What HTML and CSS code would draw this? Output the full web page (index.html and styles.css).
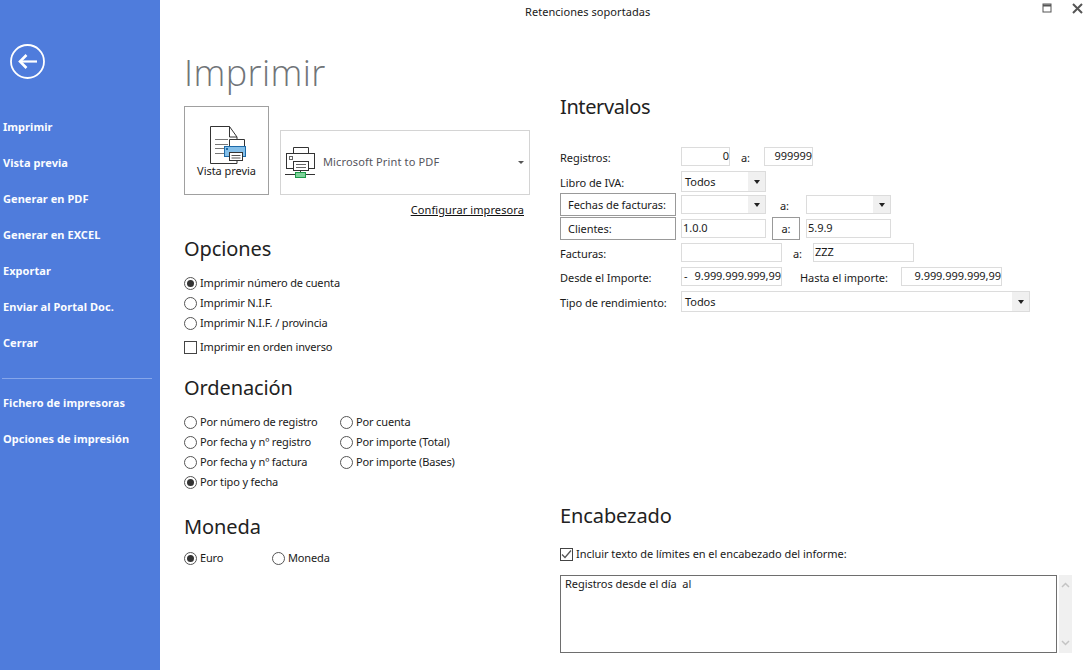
FILE: index.html
```html
<!DOCTYPE html>
<html lang="es">
<head>
<meta charset="utf-8">
<title>Retenciones soportadas</title>
<link rel="stylesheet" href="styles.css">
</head>
<body>
<div class="app">
  <aside class="side">
    <svg class="back" width="35" height="35" viewBox="0 0 35 35" fill="none" stroke="#fff">
      <circle cx="17.500" cy="17.500" r="16.500" stroke-width="1.800"/>
      <path d="M27 17.500H11" stroke-width="2.200"/>
      <path d="M16.500 11l-6.500 6.500 6.500 6.500" stroke-width="2.600"/>
    </svg>
    <nav class="nav">
      <a>Imprimir</a><a>Vista previa</a><a>Generar en PDF</a><a>Generar en EXCEL</a><a>Exportar</a><a>Enviar al Portal Doc.</a><a>Cerrar</a>
    </nav>
    <hr class="sep">
    <nav class="nav">
      <a>Fichero de impresoras</a><a>Opciones de impresión</a>
    </nav>
  </aside>
  <main class="main">
    <header class="bar">
      <span class="wintitle">Retenciones soportadas</span>
      <svg class="winbtn" width="10" height="10" viewBox="0 0 10 10" fill="none" stroke="#555"><rect x="1" y="1" width="8" height="8"/><path d="M1 2.500h8" stroke-width="2"/></svg>
      <svg class="winbtn close" width="11" height="11" viewBox="0 0 11 11" fill="none" stroke="#555" stroke-width="2"><path d="M1 1l9 9M10 1l-9 9"/></svg>
    </header>
    <div class="cols">
      <section class="left">
        <h1>Imprimir</h1>
        <div class="printrow">
          <button class="preview">
            <svg width="41" height="38" viewBox="0 0 41 38" fill="none">
              <path d="M18.500 37.500H4.500V.5h19l7.500 10.500v2.500M31 34v3.500H18" stroke="#333"/>
              <path d="M23.500 .5v10.500H31" stroke="#333"/>
              <path d="M9 13.500h13M9 18.500h13M9 22.500h9M9 27.500h9" stroke="#777"/>
              <path d="M23.500 20.500v-7h15v7" fill="#fff" stroke="#333"/>
              <rect x="18.500" y="20.500" width="21" height="10" fill="#84bfe9" stroke="#1d6aa8"/>
              <rect x="20" y="22" width="2" height="2" fill="#1d6aa8"/>
              <rect x="23.500" y="26.500" width="13" height="8" fill="#fff" stroke="#333"/>
              <path d="M25.500 29.500h9M25.500 32h9" stroke="#555"/>
            </svg>
            <span>Vista previa</span>
          </button>
          <div class="printer">
            <svg width="32" height="31" viewBox="0 0 32 31" fill="none">
              <path d="M9.500 6.500v-6h15v6" stroke="#333"/>
              <rect x="2.500" y="6.500" width="28" height="15" fill="#fff" stroke="#333"/>
              <rect x="5.500" y="9.500" width="3" height="3" stroke="#666"/>
              <rect x="9.500" y="14.500" width="15" height="9" fill="#fff" stroke="#333"/>
              <path d="M12 17.500h10M12 20.500h10" stroke="#666"/>
              <path d="M1 27.500h30M16.500 23.500v2" stroke="#333"/>
              <rect x="11.500" y="25.500" width="10" height="5" fill="#7fd39a" stroke="#1f9a4a"/>
            </svg>
            <span class="pname">Microsoft Print to PDF</span>
            <i class="caret small"></i>
          </div>
        </div>
        <div class="cfg"><a>Configurar impresora</a></div>
        <h2 class="h-op">Opciones</h2>
        <div class="list">
          <label class="opt"><i class="radio on"></i>Imprimir número de cuenta</label>
          <label class="opt"><i class="radio"></i>Imprimir N.I.F.</label>
          <label class="opt"><i class="radio"></i>Imprimir N.I.F. / provincia</label>
          <label class="opt chk"><i class="box"></i>Imprimir en orden inverso</label>
        </div>
        <h2 class="h-ord">Ordenación</h2>
        <div class="ordgrid">
          <label class="opt"><i class="radio"></i>Por número de registro</label>
          <label class="opt"><i class="radio"></i>Por cuenta</label>
          <label class="opt"><i class="radio"></i>Por fecha y nº registro</label>
          <label class="opt"><i class="radio"></i>Por importe (Total)</label>
          <label class="opt"><i class="radio"></i>Por fecha y nº factura</label>
          <label class="opt"><i class="radio"></i>Por importe (Bases)</label>
          <label class="opt"><i class="radio on"></i>Por tipo y fecha</label>
        </div>
        <h2 class="h-mon">Moneda</h2>
        <div class="monrow">
          <label class="opt"><i class="radio on"></i>Euro</label>
          <label class="opt"><i class="radio"></i>Moneda</label>
        </div>
      </section>
      <section class="right">
        <h2 class="h-int">Intervalos</h2>
        <div class="row r-reg">
          <span class="lab">Registros:</span>
          <div class="field num w49">0</div><span class="a a1">a:</span><div class="field num w49">999999</div>
        </div>
        <div class="row r-lib">
          <span class="lab">Libro de IVA:</span>
          <div class="combo w85">Todos<b><i class="caret"></i></b></div>
        </div>
        <div class="row r-box">
          <span class="lab boxed">Fechas de facturas:</span>
          <div class="combo short w85"><b><i class="caret"></i></b></div><span class="a a2">a:</span><div class="combo short w85"><b><i class="caret"></i></b></div>
        </div>
        <div class="row r-box">
          <span class="lab boxed">Clientes:</span>
          <div class="field w85">1.0.0</div><span class="a a3">a:</span><div class="field w85">5.9.9</div>
        </div>
        <div class="row r-fac">
          <span class="lab">Facturas:</span>
          <div class="field w101"></div><span class="a a4">a:</span><div class="field w101">ZZZ</div>
        </div>
        <div class="row r-imp">
          <span class="lab">Desde el Importe:</span>
          <div class="field num w101 split"><span>-</span><span>9.999.999.999,99</span></div><span class="hasta">Hasta el importe:</span><div class="field num w101">9.999.999.999,99</div>
        </div>
        <div class="row r-imp tall">
          <span class="lab">Tipo de rendimiento:</span>
          <div class="combo wide">Todos<b><i class="caret"></i></b></div>
        </div>
        <h2 class="h-enc">Encabezado</h2>
        <label class="opt inc"><i class="box tick"><svg width="13" height="13" viewBox="0 0 13 13" fill="none" stroke="#555" stroke-width="1.300"><path d="M2 6.500l3 3 6-7"/></svg></i>Incluir texto de límites en el encabezado del informe:</label>
        <div class="memo">
          <div class="memotext">Registros desde el día&nbsp; al</div>
          <div class="scroll">
            <svg width="9" height="6" viewBox="0 0 9 6" fill="none" stroke="#c4c4c4" stroke-width="1.500"><path d="M1 5l3.500-3.500L8 5"/></svg>
            <svg width="9" height="6" viewBox="0 0 9 6" fill="none" stroke="#c4c4c4" stroke-width="1.500"><path d="M1 1l3.500 3.500L8 1"/></svg>
          </div>
        </div>
      </section>
    </div>
  </main>
</div>
</body>
</html>
```
FILE: styles.css
```css
* { box-sizing: border-box; }
html, body { margin: 0; height: 100%; overflow: hidden; background: #fff; }
body { font: 11px/14px "Noto Sans", sans-serif; color: #1a1a1a; letter-spacing: -.05px; }
.app { display: flex; width: 1091px; height: 670px; }

.side { width: 160px; flex: none; background: #4f7cdc; color: #fff; padding: 44px 0 0 3px; }
.back { display: block; margin: 0 0 0 7px; }
.nav { display: flex; flex-direction: column; letter-spacing: .05px; }
.nav a { height: 36px; line-height: 36px; font-weight: 700; color: #fbfcff; }
.side > .nav:first-of-type { margin-top: 30px; }
.sep { margin: 17px 8px 6px -1px; border: 0; border-top: 1px solid #86a6ea; height: 0; }

.main { flex: 1; min-width: 0; }
.bar { display: flex; align-items: center; height: 24px; padding-left: 365px; }
.wintitle { flex: 1; letter-spacing: .05px; }
.winbtn { margin-right: 21px; margin-top: -8px; }
.winbtn.close { margin-right: 8px; margin-left: -1px; }

.cols { display: flex; padding-left: 24px; }
.left { width: 346px; flex: none; }
.right { margin-left: 30px; flex: 1; }

h1 { margin: 27px 0 0; font: 300 36px/44px "Open Sans", sans-serif; letter-spacing: .4px; color: #707478; }
h2 { margin: 0; font: 400 20px/26px "Noto Sans", sans-serif; letter-spacing: -.1px; color: #222; }

.printrow { display: flex; align-items: flex-end; gap: 11px; margin-top: 11px; }
.preview { width: 85px; height: 89px; padding: 0; border: 1px solid #a0a0a0; background: #fff; font: inherit; letter-spacing: inherit; color: inherit; display: flex; flex-direction: column; align-items: center; padding-top: 19px; }
.preview svg { display: block; }
.printer { width: 250px; height: 65px; border: 1px solid #d4d4d4; display: flex; align-items: center; padding: 0 5px 0 3px; }
.pname { margin: -2px 0 0 7px; flex: 1; color: #55555d; letter-spacing: .14px; }

.caret { display: block; width: 0; height: 0; border: 3px solid transparent; border-top: 4px solid #222; border-bottom: 0; }
.caret.small { border-width: 3px 3px 0; border-top-color: #555; }

.cfg { text-align: right; margin-top: 8px; padding-right: 6px; line-height: 14px; letter-spacing: .1px; }
.cfg a { text-decoration: underline; color: #111; }

.h-op { margin-top: 19px; }
.h-ord { margin-top: 18px; }
.h-mon { margin-top: 22px; }
.list { margin-top: 11px; }

.opt { display: flex; align-items: center; height: 20px; white-space: nowrap; letter-spacing: -.15px; }
.opt.chk { margin-top: 4px; }
.opt.inc { letter-spacing: -.05px; }
.radio { width: 13px; height: 13px; border: 1px solid #555; border-radius: 50%; margin-right: 3px; flex: none; background: #fff; }
.radio.on::after { content: ""; display: block; width: 7px; height: 7px; margin: 2px; border-radius: 50%; background: #333; }
.box { width: 13px; height: 13px; border: 1px solid #444; margin-right: 3px; flex: none; display: block; }
.tick svg { display: block; margin: -1px; }

.ordgrid { display: grid; grid-template-columns: 156px 1fr; margin-top: 11px; }
.monrow { display: flex; margin-top: 8px; }
.monrow .opt:first-child { width: 88px; }

.h-int { margin-top: 70px; margin-bottom: 27px; letter-spacing: -.4px; }
.row { display: flex; align-items: center; }
.r-reg { height: 19px; }
.r-lib { height: 21px; margin-top: 5px; }
.r-box { height: 23px; margin-top: 1px; }
.r-fac { height: 19px; margin-top: 3px; }
.r-imp { height: 19px; margin-top: 5px; }
.r-imp.tall { height: 21px; }
.lab { width: 121px; flex: none; padding-top: 2px; }
.lab.boxed { width: 116px; height: 23px; margin-right: 5px; border: 1px solid #999; padding: 0 0 0 7px; line-height: 21px; }
.field, .combo { height: 19px; border: 1px solid #dcdcdc; line-height: 16px; padding: 0 1px; flex: none; white-space: nowrap; }
.num { text-align: right; padding-right: 0; }
.split { display: flex; justify-content: space-between; padding-left: 2px; }
.w49 { width: 49px; }
.w85 { width: 85px; }
.w101 { width: 101px; }
.combo { display: flex; align-items: center; justify-content: space-between; padding: 0 0 0 3px; height: 21px; }
.combo.short { height: 19px; }
.combo.wide { width: 349px; }
.combo b { width: 17px; margin-left: auto; align-self: stretch; background: #f0f0f0; display: flex; align-items: center; justify-content: center; font-weight: 400; }
.a { flex: none; padding-top: 2px; }
.a1 { margin: 0 11px; width: 12px; }
.a2 { margin: 0 15px 0 14px; width: 11px; }
.a3 { margin: 0 6px; width: 28px; height: 23px; border: 1px solid #999; text-align: center; line-height: 21px; padding-top: 0; }
.a4 { margin: 0 11px; width: 9px; }
.hasta { width: 101px; margin-left: 18px; flex: none; padding-top: 2px; }

.h-enc { margin-top: 191px; }
.inc { margin-top: 15px; }
.memo { display: flex; gap: 2px; margin-top: 11px; height: 78px; }
.memotext { width: 497px; border: 1px solid #6e6e6e; padding: 1px 4px; }
.scroll { width: 13px; background: #f0f0f0; display: flex; flex-direction: column; justify-content: space-between; align-items: center; padding: 7px 0; }
```
